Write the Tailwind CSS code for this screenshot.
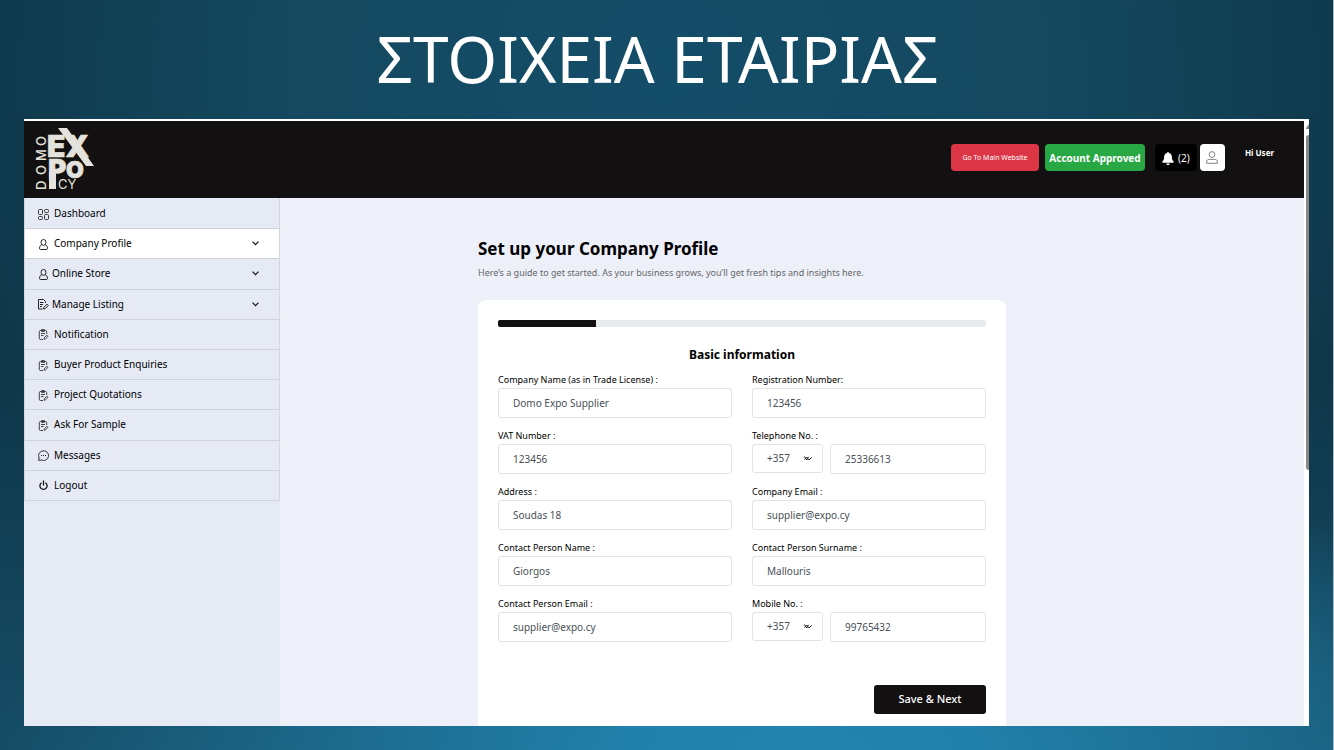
<!DOCTYPE html>
<html lang="el">
<head>
    <meta charset="UTF-8">
    <meta name="viewport" content="width=device-width, initial-scale=1.0">
    <title>Στοιχεία Εταιρίας</title>
    <script src="https://cdn.jsdelivr.net/npm/@tailwindcss/browser@4"></script>
</head>
<body class="min-h-screen flex flex-col border-r border-[#a9bcc6] font-['Noto_Sans',sans-serif] text-black bg-[#0f3649] bg-[radial-gradient(ellipse_60%_40%_at_60%_100%,#2384af_0%,#2180aa_22%,#1e6f93_50%,transparent_100%),radial-gradient(ellipse_56%_100%_at_50%_10%,#144d69_0%,#14495f_50%,transparent_100%),linear-gradient(to_bottom,transparent_50%,#164d66_100%)]">

    <h1 class="pb-px pr-[18px] text-center text-[64px] leading-[118px] text-white">ΣΤΟΙΧΕΙΑ ΕΤΑΙΡΙΑΣ</h1>

    <!-- Shared icons -->
    <svg class="hidden" fill="none">
        <symbol id="grid" viewBox="0 0 11 11"><rect x=".5" y=".5" width="4" height="5" rx="1"/><rect x="6.500" y=".5" width="4" height="3" rx="1"/><rect x=".5" y="7.500" width="4" height="3" rx="1"/><rect x="6.500" y="5.500" width="4" height="5" rx="1"/></symbol>
        <symbol id="person" viewBox="0 0 11 11"><ellipse cx="5.500" cy="3.400" rx="2.500" ry="2.900"/><path d="M3.800 5.600C2.300 6.400 1.500 7.700 1.500 9.300c0 .8.400 1.200 1.200 1.200h5.600c.8 0 1.200-.4 1.200-1.200 0-1.600-.8-2.900-2.300-3.700"/></symbol>
        <symbol id="listing" viewBox="0 0 11 11"><path d="M7.500 4V2.500L5.500.500H.5v9.500h4M2 3.500h3.500M2 5.500h3M2 7.500h2M5.500 10l.4-1.700L9 5.100l1.400 1.400-3.100 3.100z"/></symbol>
        <symbol id="clipboard" viewBox="0 0 11 11"><path stroke-width=".9" d="M5 10.500H2.500c-.8 0-1.200-.4-1.200-1.200V2.700c0-.8.400-1.200 1.200-1.200h5c.8 0 1.200.4 1.200 1.200V5M3.500.600h3v1.800h-3zM3 4.500h4M3 6.500h2.500M6 10.200l.3-1.400 2.600-2.600 1.100 1.100-2.600 2.600z"/></symbol>
        <symbol id="chevron" viewBox="0 0 7 5"><path stroke-width="1.200" d="M.5.700l3 3 3-3"/></symbol>
        <symbol id="arrows" viewBox="0 0 8 5"><path d="M.5.500l2.200 3.500L4.500.800M.5 3.500l2-2.500L5.200 4 7.700 1.300"/></symbol>
    </svg>

    <!-- Browser window -->
    <div class="ml-6 mr-6 mb-6 flex flex-1 bg-white">
        <div class="flex min-w-0 flex-1 flex-col pt-[2px]">

            <!-- Top bar -->
            <header class="flex h-[77px] items-center bg-[#121011] pl-3 pr-[30px]">
                <a href="#" aria-label="Domo Expo CY">
                    <svg class="overflow-visible" width="60" height="66" viewBox="0 0 60 66" fill="#e3e2dc" font-family="Inter, sans-serif">
                        <g font-weight="900" stroke="#e3e2dc" stroke-width=".6">
                            <text x="11" y="30" font-size="30">EX</text>
                            <text x="12" y="53" font-size="28">P</text>
                            <text x="30" y="51" font-size="23">O</text>
                        </g>
                        <path d="M22 1h9l27 38h-8zM13 45h7v17h-7z"/>
                        <text x="22" y="62" font-size="13">CY</text>
                        <text transform="translate(10 62) rotate(-90)" font-size="13" font-weight="500"><tspan x="-1">D</tspan><tspan x="14">O</tspan><tspan x="28">M</tspan><tspan x="43">O</tspan></text>
                    </svg>
                </a>
                <div class="ml-auto flex items-center pb-1">
                    <a href="#" class="flex h-[27px] w-[88px] items-center justify-center rounded bg-[#dc3545] pt-px text-[7px] text-white">Go To Main Website</a>
                    <button class="ml-[6px] h-[27px] w-[100px] rounded bg-[#28a745] pt-px text-[10px] font-bold text-white">Account Approved</button>
                    <button class="ml-[10px] flex h-[27px] w-[42px] items-center justify-center gap-1 rounded bg-black pt-px text-[10px] text-white" aria-label="Notifications">
                        <svg width="12" height="13" viewBox="0 0 12 13" fill="#fff"><path d="M6 0c.6 0 .9.4.9.9C9 1.300 9.900 3 9.900 5c0 2.500.8 3.700 1.600 4.400.5.500.2 1.300-.5 1.300H1c-.7 0-1-.8-.5-1.300C1.300 8.700 2.100 7.500 2.100 5 2.100 3 3 1.300 5.100.900 5.100.4 5.400 0 6 0zM4.400 11.400h3.200C7.600 12.400 7 13 6 13s-1.600-.6-1.600-1.600z"/></svg>
                        (2)
                    </button>
                    <button class="ml-[3px] flex h-[27px] w-[25px] items-center justify-center rounded bg-white" aria-label="Account">
                        <svg width="12" height="13" viewBox="0 0 12 13" fill="none" stroke="#666" stroke-width=".8"><circle cx="6" cy="3.500" r="2.900"/><path d="M.6 12.300V11c0-1.600 1-2.600 2.600-2.600h5.600c1.600 0 2.600 1 2.600 2.600v1.300z"/></svg>
                    </button>
                    <span class="mb-[10px] ml-5 text-[8px] font-bold text-white">Hi User</span>
                </div>
            </header>

            <div class="flex flex-1">
                <!-- Sidebar -->
                <aside class="w-64 shrink-0 bg-[#e5eaf5]">
                    <nav class="grid h-[303px] auto-rows-fr border-x border-[#d3d6dd] pt-px text-[10px]">
                        <a href="#" class="flex items-center gap-[5px] border-b border-[#cfd2d9] pl-[13px]">
                            <svg class="mt-px" width="11" height="11" fill="none" stroke="#333"><use href="#grid"/></svg>
                            Dashboard
                        </a>
                        <a href="#" class="flex items-center gap-[5px] border-b border-[#cfd2d9] bg-white pl-[13px]">
                            <svg class="mt-px" width="11" height="11" fill="none" stroke="#222"><use href="#person"/></svg>
                            Company Profile
                            <svg class="ml-auto mr-5" width="7" height="5" fill="none" stroke="#111"><use href="#chevron"/></svg>
                        </a>
                        <a href="#" class="flex items-center gap-[3px] border-b border-[#cfd2d9] pl-[13px]">
                            <svg class="mt-px" width="11" height="11" fill="none" stroke="#222"><use href="#person"/></svg>
                            Online Store
                            <svg class="ml-auto mr-5" width="7" height="5" fill="none" stroke="#111"><use href="#chevron"/></svg>
                        </a>
                        <a href="#" class="flex items-center gap-[3px] border-b border-[#cfd2d9] pl-[13px]">
                            <svg class="mt-px" width="11" height="11" fill="none" stroke="#222"><use href="#listing"/></svg>
                            Manage Listing
                            <svg class="ml-auto mr-5" width="7" height="5" fill="none" stroke="#111"><use href="#chevron"/></svg>
                        </a>
                        <a href="#" class="flex items-center gap-[5px] border-b border-[#cfd2d9] pl-[13px]">
                            <svg class="mt-px" width="11" height="11" fill="none" stroke="#333"><use href="#clipboard"/></svg>
                            Notification
                        </a>
                        <a href="#" class="flex items-center gap-[5px] border-b border-[#cfd2d9] pl-[13px]">
                            <svg class="mt-px" width="11" height="11" fill="none" stroke="#333"><use href="#clipboard"/></svg>
                            Buyer Product Enquiries
                        </a>
                        <a href="#" class="flex items-center gap-[5px] border-b border-[#cfd2d9] pl-[13px]">
                            <svg class="mt-px" width="11" height="11" fill="none" stroke="#333"><use href="#clipboard"/></svg>
                            Project Quotations
                        </a>
                        <a href="#" class="flex items-center gap-[5px] border-b border-[#cfd2d9] pl-[13px]">
                            <svg class="mt-px" width="11" height="11" fill="none" stroke="#333"><use href="#clipboard"/></svg>
                            Ask For Sample
                        </a>
                        <a href="#" class="flex items-center gap-[5px] border-b border-[#cfd2d9] pl-[13px]">
                            <svg class="mt-px" width="11" height="11" viewBox="0 0 11 11" fill="none" stroke="#222" stroke-width=".9"><path d="M.6 10.400l.6-2.400A5 4.900 0 1 1 3.300 10z"/><path d="M3 5.500h1M5 5.500h1M7 5.500h1" stroke-width="1.100"/></svg>
                            Messages
                        </a>
                        <a href="#" class="flex items-center gap-[5px] border-b border-[#cfd2d9] pl-[13px]">
                            <svg class="mt-px" width="11" height="11" viewBox="0 0 11 11" fill="none" stroke="#111" stroke-width="1.300"><path d="M3.600 2.800a3.600 3.600 0 1 0 3.800 0M5.500.500v5"/></svg>
                            Logout
                        </a>
                    </nav>
                </aside>

                <!-- Company profile form -->
                <main class="flex flex-1 flex-col bg-[#edf0f9] pl-[198px] pt-[38px]">
                    <h2 class="text-[17px] font-bold leading-[26px]">Set up your Company Profile</h2>
                    <p class="mt-1 text-[9px] leading-[14px] text-[#666]">Here’s a guide to get started. As your business grows, you’ll get fresh tips and insights here.</p>

                    <form class="mt-5 w-full max-w-[528px] flex-1 rounded-t-lg bg-white px-5 pb-3 pt-5">
                        <div class="h-[7px] overflow-hidden rounded-xs bg-[#e9ecef]">
                            <div class="h-full w-1/5 bg-[#121011]"></div>
                        </div>
                        <h3 class="mt-4 text-center text-xs font-bold leading-6">Basic information</h3>

                        <div class="mt-[5px] grid grid-cols-2 gap-x-5 gap-y-[10px] text-[9px]">
                            <div>
                                <label for="company" class="block leading-4">Company Name (as in Trade License) :</label>
                                <input id="company" type="text" value="Domo Expo Supplier" class="block h-[30px] w-full rounded-[3px] border border-[#e2e3e5] px-[14px] text-[10px] text-[#495057]">
                            </div>
                            <div>
                                <label for="registration" class="block leading-4">Registration Number:</label>
                                <input id="registration" type="text" value="123456" class="block h-[30px] w-full rounded-[3px] border border-[#e2e3e5] px-[14px] text-[10px] text-[#495057]">
                            </div>
                            <div>
                                <label for="vat" class="block leading-4">VAT Number :</label>
                                <input id="vat" type="text" value="123456" class="block h-[30px] w-full rounded-[3px] border border-[#e2e3e5] px-[14px] text-[10px] text-[#495057]">
                            </div>
                            <div>
                                <label for="telephone" class="block leading-4">Telephone No. :</label>
                                <div class="flex gap-[7px]">
                                    <div class="relative">
                                        <select aria-label="Telephone country code" class="block h-[29px] w-[71px] appearance-none rounded-[3px] border border-[#e2e3e5] px-[14px] text-[10px] text-[#495057]">
                                            <option>+357</option>
                                        </select>
                                        <svg class="pointer-events-none absolute right-[11px] top-3" width="8" height="5" fill="none" stroke="#222"><use href="#arrows"/></svg>
                                    </div>
                                    <input id="telephone" type="tel" value="25336613" class="block h-[30px] min-w-0 flex-1 rounded-[3px] border border-[#e2e3e5] px-[14px] text-[10px] text-[#495057]">
                                </div>
                            </div>
                            <div>
                                <label for="address" class="block leading-4">Address :</label>
                                <input id="address" type="text" value="Soudas 18" class="block h-[30px] w-full rounded-[3px] border border-[#e2e3e5] px-[14px] text-[10px] text-[#495057]">
                            </div>
                            <div>
                                <label for="companyEmail" class="block leading-4">Company Email :</label>
                                <input id="companyEmail" type="email" value="supplier@expo.cy" class="block h-[30px] w-full rounded-[3px] border border-[#e2e3e5] px-[14px] text-[10px] text-[#495057]">
                            </div>
                            <div>
                                <label for="contactName" class="block leading-4">Contact Person Name :</label>
                                <input id="contactName" type="text" value="Giorgos" class="block h-[30px] w-full rounded-[3px] border border-[#e2e3e5] px-[14px] text-[10px] text-[#495057]">
                            </div>
                            <div>
                                <label for="contactSurname" class="block leading-4">Contact Person Surname :</label>
                                <input id="contactSurname" type="text" value="Mallouris" class="block h-[30px] w-full rounded-[3px] border border-[#e2e3e5] px-[14px] text-[10px] text-[#495057]">
                            </div>
                            <div>
                                <label for="contactEmail" class="block leading-4">Contact Person Email :</label>
                                <input id="contactEmail" type="email" value="supplier@expo.cy" class="block h-[30px] w-full rounded-[3px] border border-[#e2e3e5] px-[14px] text-[10px] text-[#495057]">
                            </div>
                            <div>
                                <label for="mobile" class="block leading-4">Mobile No. :</label>
                                <div class="flex gap-[7px]">
                                    <div class="relative">
                                        <select aria-label="Mobile country code" class="block h-[29px] w-[71px] appearance-none rounded-[3px] border border-[#e2e3e5] px-[14px] text-[10px] text-[#495057]">
                                            <option>+357</option>
                                        </select>
                                        <svg class="pointer-events-none absolute right-[11px] top-3" width="8" height="5" fill="none" stroke="#222"><use href="#arrows"/></svg>
                                    </div>
                                    <input id="mobile" type="tel" value="99765432" class="block h-[30px] min-w-0 flex-1 rounded-[3px] border border-[#e2e3e5] px-[14px] text-[10px] text-[#495057]">
                                </div>
                            </div>
                        </div>

                        <button type="button" class="ml-auto mt-[43px] block h-[29px] w-28 rounded-[3px] bg-[#121011] text-[11px] font-medium text-white">Save &amp; Next</button>
                    </form>
                </main>
            </div>
        </div>

        <!-- Scrollbar -->
        <div class="flex w-[5px] flex-col items-end pt-[5px]">
            <svg width="3" height="5" viewBox="0 0 3 5" fill="#888"><path d="M3 0v5H0V4z"/></svg>
            <div class="mt-[6px] h-[335px] w-[3px] rounded-l-sm bg-[#888]"></div>
        </div>
    </div>
</body>
</html>
